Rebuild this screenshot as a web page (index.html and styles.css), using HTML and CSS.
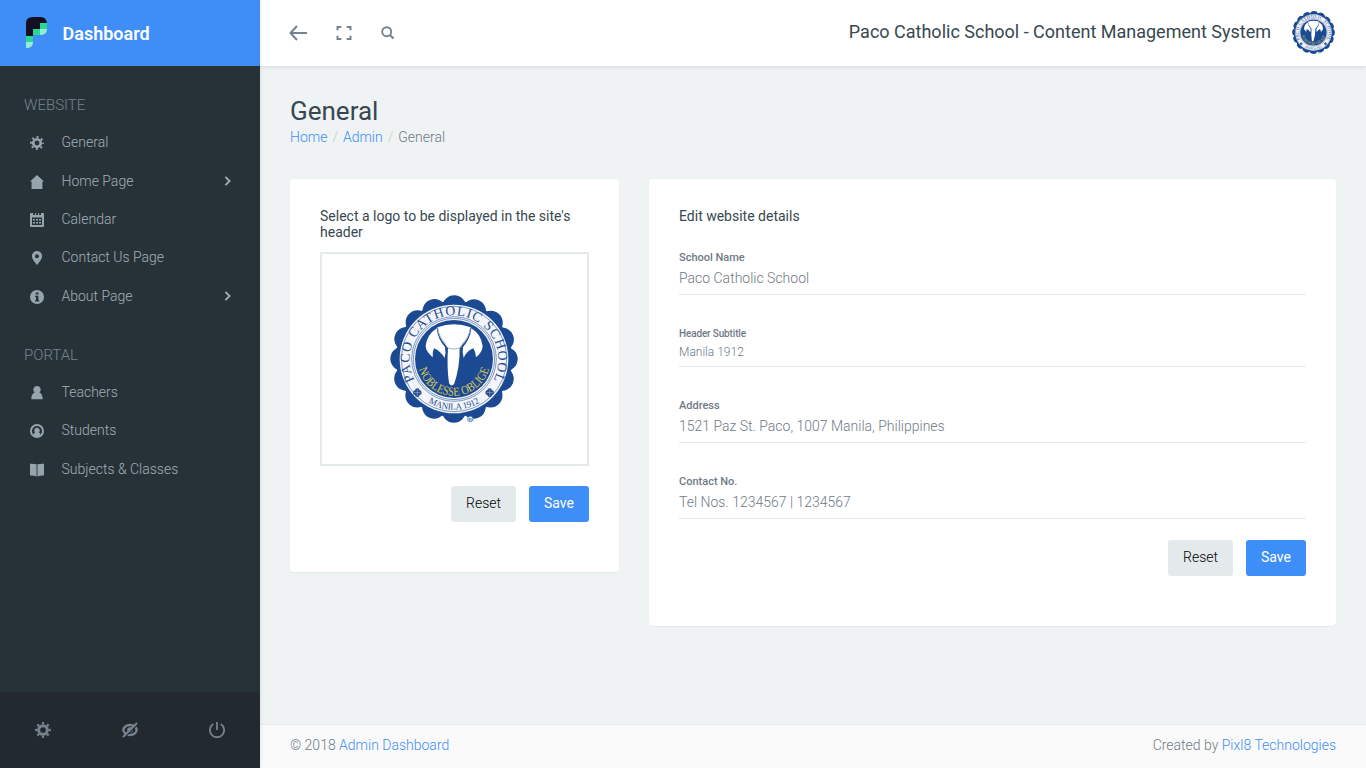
FILE: index.html
```html
<!DOCTYPE html>
<html lang="en">
<head>
<meta charset="utf-8">
<title>General - Admin Dashboard</title>
<link rel="stylesheet" href="styles.css">
</head>
<body>
<svg width="0" height="0" class="defs" aria-hidden="true">
  <defs>
    <path id="arc-name" d="M109 288A133 133 0 1 1 335 288"/>
    <path id="arc-city" d="M108 317A153 153 0 0 0 336 317"/>
    <path id="arc-motto" d="M114 232A109 109 0 0 0 330 232"/>
    <symbol id="seal" viewBox="30 24 384 384">
      <circle cx="222" cy="216" r="174" fill="#1b4a92"/>
      <circle cx="222" cy="216" r="155" pathLength="16" fill="none" stroke="#1b4a92" stroke-width="72" stroke-linecap="round" stroke-dasharray="0.001 0.999"/>
      <circle cx="222" cy="216" r="163" fill="#f4f5fa"/>
      <circle cx="222" cy="216" r="158" fill="none" stroke="#4469a8" stroke-width="2"/>
      <circle cx="222" cy="216" r="127" fill="none" stroke="#4469a8" stroke-width="2"/>
      <circle cx="222" cy="216" r="122" fill="none" stroke="#4469a8" stroke-width="2"/>
      <circle cx="222" cy="216" r="117" fill="#1b4a92"/>
      <path fill="#fff" d="M172 121Q222 102 272 121Q267 157 246 174L239 183Q240 240 222 292Q212 300 207 288Q200 240 204 183L197 174Q176 155 172 121ZM170 124Q174 158 195 180Q198 197 194 213Q181 192 162 184Q157 194 158 211Q137 193 137 177Q141 143 170 124ZM274 124Q303 142 308 177Q307 196 288 211Q287 194 280 184Q260 192 251 213Q246 196 249 180Q270 158 274 124Z"/>
      <path fill="none" stroke="#7189b8" stroke-width="2" d="M172 121Q178 154 198 172M272 121Q266 154 246 172M198 180Q222 192 246 180"/>
      <g font-family="'Liberation Serif',serif" text-anchor="middle" fill="#234b8d">
        <text font-size="41"><textPath href="#arc-name" startOffset="50%" textLength="545">PACO CATHOLIC SCHOOL</textPath></text>
        <text font-size="27"><textPath href="#arc-city" startOffset="50%" textLength="162">MANILA 1912</textPath></text>
        <text font-size="37" fill="#ddc85c" stroke="#1b4a92" stroke-width="4" paint-order="stroke"><textPath href="#arc-motto" startOffset="50%" textLength="284" lengthAdjust="spacingAndGlyphs">NOBLESSE OBLIGE</textPath></text>
      </g>
      <g fill="#234b8d"><circle cx="112" cy="311" r="7"/><circle cx="112" cy="323" r="7"/><circle cx="106" cy="317" r="7"/><circle cx="118" cy="317" r="7"/><circle cx="329" cy="311" r="7"/><circle cx="329" cy="323" r="7"/><circle cx="323" cy="317" r="7"/><circle cx="335" cy="317" r="7"/></g>
      <path stroke="#b9c6df" stroke-width="1.500" d="M102 317h20M112 307v20M319 317h20M329 307v20"/>
      <circle cx="271" cy="396" r="8" fill="#fff" stroke="#3677b5" stroke-width="2.500"/>
      <text x="266" y="401" font-family="'Liberation Sans',sans-serif" font-size="13" font-weight="700" fill="#3677b5">R</text>
    </symbol>
    <symbol id="gear" viewBox="0 0 16 16">
      <circle cx="8" cy="8" r="4.350" fill="none" stroke="currentColor" stroke-width="3"/>
      <circle cx="8" cy="8" r="6.800" pathLength="8" fill="none" stroke="currentColor" stroke-width="2.300" stroke-dasharray=".42 .58" stroke-dashoffset=".21"/>
    </symbol>
    <symbol id="chevron" viewBox="0 0 8 10"><path d="M1.400 .9 5.600 5 1.400 9.100" fill="none" stroke="currentColor" stroke-width="1.800"/></symbol>
  </defs>
</svg>
<div class="app">
  <aside class="sidebar">
    <div class="brand">
      <svg class="brand-mark" viewBox="0 0 21 31">
        <path fill="#140f22" d="M0 19V6Q0 0 7 0h8q5 0 6 6H14v6H7v7z"/>
        <path fill="#25d995" d="M14 6h7v6h-7zM7 12h7v6H7zM0 19h7v6H0z"/>
        <path fill="#93efd0" d="M14 12h7q0 6-7 6zM0 25h7q0 6-7 6z"/>
      </svg>
      <span>Dashboard</span>
    </div>
    <nav class="menu">
      <h2>WEBSITE</h2>
      <a><svg class="ico"><use href="#gear"/></svg>General</a>
      <a><svg class="ico" viewBox="0 0 16 16"><path fill="currentColor" d="M8 0 16 7.500h-1.800V16H1.800V7.500H0z"/></svg>Home Page<svg class="chev"><use href="#chevron"/></svg></a>
      <a><svg class="ico" viewBox="0 0 14 14"><path fill="currentColor" fill-rule="evenodd" d="M1 0h2v2h2V0h1v2h2V0h1v2h2V0h2q1 0 1 1v12q0 1-1 1H1q-1 0-1-1V1q0-1 1-1zM2 4.500V12h10V4.500zM3 6h2v1.500H3zM6 6h2v1.500H6zM9 6h2v1.500H9zM3 9h2v1.500H3zM6 9h2v1.500H6zM9 9h2v1.500H9z"/></svg>Calendar</a>
      <a><svg class="ico" viewBox="0 0 16 16"><path fill="currentColor" fill-rule="evenodd" d="M8 0a5.800 5.800 0 0 1 5.800 5.800C13.800 10 8 16 8 16S2.200 10 2.200 5.800A5.800 5.800 0 0 1 8 0zm0 3.600a2.300 2.300 0 1 0 0 4.600 2.300 2.300 0 0 0 0-4.600z"/></svg>Contact Us Page</a>
      <a><svg class="ico" viewBox="0 0 16 16"><circle cx="8" cy="8" r="8" fill="currentColor"/><path fill="#273238" d="M6.600 2.800h3v2.300h-3zM5.800 6.600h3.800v5h1v1.500H5.800v-1.500h1V8.100h-1z"/></svg>About Page<svg class="chev"><use href="#chevron"/></svg></a>
      <h2 class="second">PORTAL</h2>
      <a><svg class="ico" viewBox="0 0 16 16"><path fill="currentColor" d="M8 0a4.200 4.200 0 0 1 2.600 7.500c2.200.8 3.600 2.700 3.900 7.500h-13c.3-4.800 1.700-6.700 3.900-7.500A4.200 4.200 0 0 1 8 0z"/></svg>Teachers</a>
      <a><svg class="ico" viewBox="0 0 16 16"><circle cx="8" cy="8" r="6.900" fill="none" stroke="currentColor" stroke-width="2.200"/><path fill="currentColor" d="M8 4.200a3.200 3.200 0 0 1 2.200 5.500L12 11.200 11 14.500H5L4 11.200 5.800 9.700A3.200 3.200 0 0 1 8 4.200z"/></svg>Students</a>
      <a><svg class="ico" viewBox="0 0 16 16"><path fill="currentColor" d="M0 .8Q4 .5 7.500 1.500v14Q4 14 0 14.300zM8.500 1.500Q12 .5 16 .8v13.500Q12 14 8.500 15.500z"/></svg>Subjects &amp; Classes</a>
    </nav>
    <div class="tools">
      <span><svg viewBox="0 0 16 16"><use href="#gear"/></svg></span>
      <span><svg viewBox="0 0 16 16"><ellipse cx="8" cy="8" rx="6.600" ry="5" fill="none" stroke="currentColor" stroke-width="2.400"/><circle cx="8" cy="8" r="2.800" fill="currentColor"/><path stroke="#22292f" stroke-width="1.200" d="M2.500 15.500 15 3"/><path stroke="currentColor" stroke-width="1.900" d="M1 15 15 1"/></svg></span>
      <span><svg viewBox="0 0 16 16"><path fill="none" stroke="currentColor" stroke-width="1.800" d="M4.300 2.100a7.100 7.100 0 1 0 7.400 0M8 0v8"/></svg></span>
    </div>
  </aside>
  <div class="page">
    <header class="topbar">
      <svg class="back" viewBox="0 0 18 16"><path fill="none" stroke="currentColor" stroke-width="2" d="M8 1 1.500 8 8 15M1.500 8H18"/></svg>
      <svg class="full" viewBox="0 0 16 16"><path fill="none" stroke="currentColor" stroke-width="2" d="M1.500 5.300V2H5.300M10.700 2H14.500V5.300M14.500 10.700V14H10.700M5.300 14H1.500V10.700"/></svg>
      <svg class="search" viewBox="0 0 14 14"><circle cx="5.700" cy="5.700" r="4.500" fill="none" stroke="currentColor" stroke-width="1.900"/><path stroke="currentColor" stroke-width="2.200" d="M9 9l3.500 3.500"/></svg>
      <span class="site">Paco Catholic School - Content Management System</span>
      <svg class="avatar"><use href="#seal"/></svg>
    </header>
    <main class="content">
      <h1>General</h1>
      <div class="crumbs"><a>Home</a><i>/</i><a>Admin</a><i>/</i><span>General</span></div>
      <div class="cards">
        <section class="card logo-card">
          <h3>Select a logo to be displayed in the site's header</h3>
          <div class="preview"><svg><use href="#seal"/></svg></div>
          <div class="actions"><button>Reset</button><button class="primary">Save</button></div>
        </section>
        <section class="card details-card">
          <h3>Edit website details</h3>
          <div class="field"><label>School Name</label><div class="value">Paco Catholic School</div></div>
          <div class="field small"><label>Header Subtitle</label><div class="value">Manila 1912</div></div>
          <div class="field"><label>Address</label><div class="value">1521 Paz St. Paco, 1007 Manila, Philippines</div></div>
          <div class="field"><label>Contact No.</label><div class="value">Tel Nos. 1234567 | 1234567</div></div>
          <div class="actions"><button>Reset</button><button class="primary">Save</button></div>
        </section>
      </div>
    </main>
    <footer class="footer"><span>© 2018 <a>Admin Dashboard</a></span><span>Created by <a>Pixl8 Technologies</a></span></footer>
  </div>
</div>
</body>
</html>
```
FILE: styles.css
```css
* { box-sizing: border-box; }
body { margin: 0; font: 300 14px/20px Roboto, sans-serif; color: #6f7a85; background: #eff3f4; }
h1, h2, h3 { margin: 0; }
svg { flex: none; display: block; }
.defs { position: absolute; }
.app { display: flex; height: 768px; overflow: hidden; }
.sidebar { width: 260px; flex: none; display: flex; flex-direction: column; background: #273238; box-shadow: 0 0 4px rgba(0,0,0,.12); z-index: 2; }
.brand { height: 66px; flex: none; display: flex; align-items: center; padding-left: 26px; background: #3f8ef8; color: #fff; font-size: 18px; font-weight: 600; }
.brand span { padding-top: 1px; }
.brand-mark { width: 21px; height: 31px; margin: 0 15.500px 2px 0; }
.menu { flex: 1; padding-top: 29px; }
.menu h2 { height: 28px; padding-left: 24px; font-size: 15px; line-height: 20px; font-weight: 300; color: #76838f; }
.menu h2.second { margin-top: 29.800px; }
.menu a { display: flex; align-items: center; height: 38.400px; padding: 0 28px 0 30px; color: #a3afb7; }
.ico { width: 14px; height: 14px; margin: 2px 17.500px 0 0; color: #96a4ac; }
.chev { width: 8px; height: 10px; margin: 0 0 0 auto; }
.tools { height: 76px; flex: none; display: flex; background: #22292f; color: #76838f; }
.tools span { flex: 1; display: flex; align-items: center; justify-content: center; }
.tools svg { width: 16px; height: 16px; }
.page { flex: 1; min-width: 0; display: flex; flex-direction: column; }
.topbar { height: 66px; flex: none; display: flex; align-items: center; padding: 0 31px 0 29px; background: #fff; box-shadow: 0 2px 4px rgba(0,0,0,.08); color: #76838f; }
.back { width: 18px; height: 16px; }
.full { width: 16px; height: 16px; margin-left: 29px; }
.search { width: 14px; height: 14px; margin: 0 0 1px 29px; }
.site { margin: 0 21px 2px auto; color: #37474f; font-size: 18px; font-weight: 400; }
.avatar { width: 43px; height: 43px; margin-top: -2px; }
.content { flex: 1; padding: 30px 30px 0; }
h1 { font-size: 26px; line-height: 31px; font-weight: 400; color: #37474f; }
.crumbs { display: flex; height: 20px; }
.crumbs i { width: 15.500px; text-align: center; font-style: normal; color: #c4ccd1; }
a { color: #3e8ef7; }
.cards { display: flex; align-items: flex-start; gap: 30px; margin-top: 32px; }
.card { padding: 29px 30px 0; background: #fff; border-radius: 4px; box-shadow: 0 1px 1px rgba(0,0,0,.05); }
.logo-card { width: 329px; height: 393px; }
.details-card { flex: 1; height: 447px; }
h3 { font-size: 14px; line-height: 16px; font-weight: 400; color: #37474f; }
.preview { height: 214px; margin: 12px 0 20px; padding: 0 1px 1px 0; border: 2px solid #e4eaec; display: flex; align-items: center; justify-content: center; }
.preview svg { width: 128px; height: 128px; }
.actions { display: flex; justify-content: flex-end; gap: 13px; }
button { width: 65px; height: 36px; padding: 0 0 2px; border: 0; border-radius: 3px; background: #e4eaec; color: #000; font: 300 14px Roboto, sans-serif; }
button.primary { width: 60px; background: #3e8ef7; color: #fff; font-weight: 400; }
.field { height: 46px; margin-bottom: 30px; border-bottom: 1px solid #e4eaec; }
h3 + .field { margin-top: 25px; }
.field label { display: block; height: 19px; font-size: 11px; line-height: 18px; font-weight: 500; }
.field .value { font-size: 14px; line-height: 20px; }
.field.small { height: 42px; }
.field.small label { height: 17px; font-size: 10px; letter-spacing: -.15px; }
.field.small .value { font-size: 12px; }
.field:nth-last-of-type(2) { margin-bottom: 21px; }
.footer { height: 44px; flex: none; display: flex; justify-content: space-between; padding: 10px 30px; border-top: 1px solid #e4eaec; background: #fafafa; }
```
